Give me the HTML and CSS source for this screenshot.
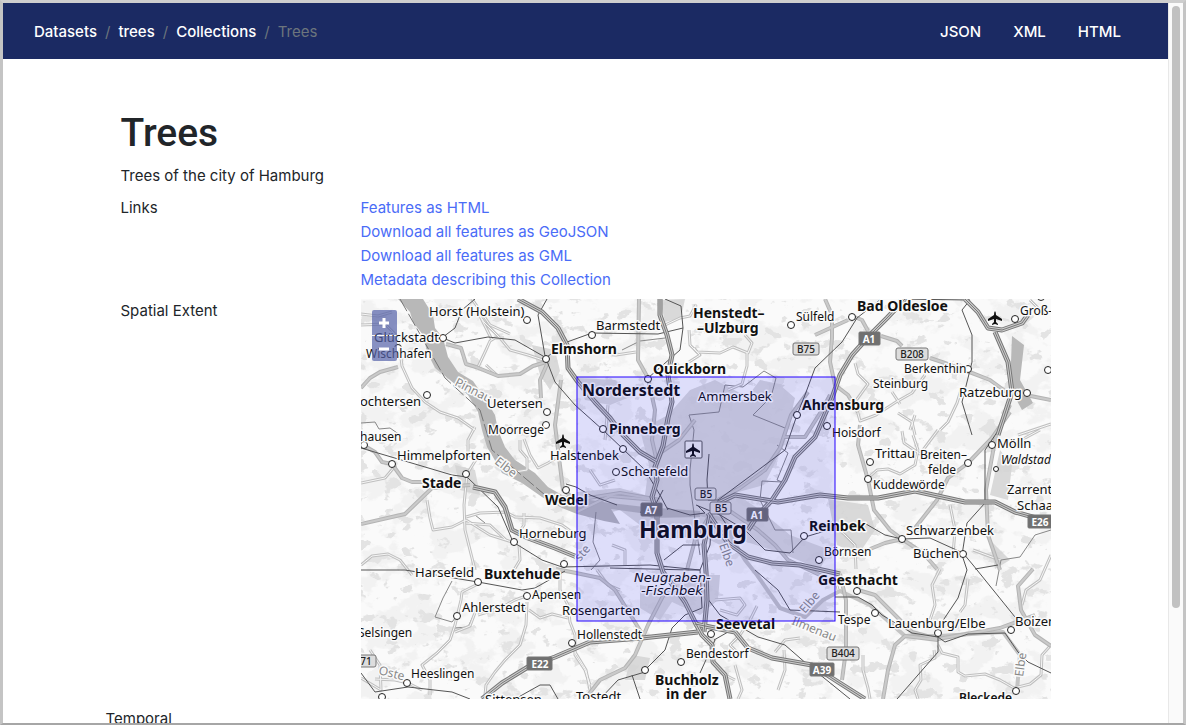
FILE: index.html
```html
<!DOCTYPE html>
<html lang="en">
<head>
<meta charset="utf-8">
<title>Trees</title>
<link rel="stylesheet" href="styles.css">
</head>
<body>
<div class="window">
  <div class="page">
    <header class="navbar">
      <nav aria-label="Breadcrumb">
        <ol class="breadcrumb">
          <li><a href="#">Datasets</a></li>
          <li><a href="#">trees</a></li>
          <li><a href="#">Collections</a></li>
          <li class="active">Trees</li>
        </ol>
      </nav>
      <nav class="formats" aria-label="Formats">
        <a href="#">JSON</a><a href="#">XML</a><a href="#">HTML</a>
      </nav>
    </header>
    <main class="container">
      <h1>Trees</h1>
      <p class="lead">Trees of the city of Hamburg</p>
      <section class="row tight">
        <div class="term">Links</div>
        <ul class="links">
          <li><a href="#">Features as HTML</a></li>
          <li><a href="#">Download all features as GeoJSON</a></li>
          <li><a href="#">Download all features as GML</a></li>
          <li><a href="#">Metadata describing this Collection</a></li>
        </ul>
      </section>
      <section class="row">
        <div class="term">Spatial Extent</div>
        <div class="map">
          <svg class="tiles" viewBox="361 299 690 400" role="img" aria-label="Map of Hamburg">
            <defs>
              <filter id="fields" x="0" y="0" width="100%" height="100%" color-interpolation-filters="sRGB">
                <feTurbulence type="fractalNoise" baseFrequency="0.06 0.08" numOctaves="4" seed="8"/>
                <feColorMatrix values="0 0 0 0 .89  0 0 0 0 .89  0 0 0 0 .89  16 0 0 0 -9.8"/>
              </filter>
              <filter id="meadows" x="0" y="0" width="100%" height="100%" color-interpolation-filters="sRGB">
                <feTurbulence type="fractalNoise" baseFrequency="0.03 0.04" numOctaves="5" seed="21"/>
                <feColorMatrix values="0 0 0 0 .95  0 0 0 0 .95  0 0 0 0 .95  14 0 0 0 -7"/>
              </filter>
              <g id="motorways">
                <path d="M518 299L542 312L558 328L567 345L568 368L578 382L595 402L610 418L622 434L640 452L657 462"/>
                <path d="M660 299L660 315L667 335L672 355L668 375L672 402L668 418L663 446L655 467L657 480L652 497L657 513L657 553L663 572L675 588L685 602L695 622L702 635L712 645L713 662L725 675L730 699"/>
                <path d="M482 699L502 683L528 667L555 657L590 642L642 638L698 632"/>
                <path d="M695 624L735 632L748 648L772 658L812 665L835 680L865 699"/>
                <path d="M905 299L887 318L870 335L852 355L840 375L832 398L815 437L795 457L785 480L772 500L758 515L748 530"/>
                <path d="M718 503L735 495L778 502L820 495L848 498L878 498L915 491L965 502L995 502L1015 512L1051 522"/>
                <path d="M708 513L728 543L748 557L772 563L800 565L840 574"/>
                <path d="M473 487L495 492L505 507L512 530L528 538L555 548L577 557"/>
                <path d="M710 515L704 545L706 572L707 600L704 632"/>
                <path d="M965 299L978 312L988 328L1002 330L1022 323L1030 312"/>
                <path d="M995 332L1008 362L1012 392L998 435"/>
              </g>
              <g id="mainroads">
                <path d="M825 299L832 315L832 338L830 362L835 385L848 395L858 412"/>
                <path d="M639 299L638 360L648 378L655 410L652 440L657 462"/>
                <path d="M361 524L405 514L432 488L470 485"/>
                <path d="M363 445L375 452L382 462L392 464L402 478L412 482L432 482"/>
                <path d="M361 388L370 378L380 372L398 367"/>
                <path d="M446 344L461 348L466 364L476 367L498 376L520 374L533 366L546 362"/>
                <path d="M548 362L540 380L541 398M561 380L555 425L563 490L576 500L620 493L660 500"/>
                <path d="M718 500L740 488L765 470L780 448L791 415L808 392"/>
                <path d="M860 425L858 445L868 480L874 510L890 530L902 539L923 553L937 569"/>
                <path d="M915 528L937 500L948 478L968 463L992 438L1010 412"/>
                <path d="M870 549L885 543L902 539"/>
                <path d="M1000 570L988 535L986 490L996 435L1010 405"/>
                <path d="M881 336L897 341L902 346M930 358L942 362L972 373L990 380L1005 391L1051 400"/>
                <path d="M868 331L862 320L852 316M848 320L815 335"/>
                <path d="M858 590L875 595L890 610L912 632L938 639L1000 628L1035 615"/>
                <path d="M938 640L905 636L895 645L888 670L883 699"/>
                <path d="M664 594L648 625L635 655L625 668L600 680L585 699"/>
                <path d="M641 632L615 590L600 578L576 573L556 569"/>
                <path d="M784 437L805 437L822 410L830 395M656 500L610 496L577 512"/>
                <path d="M840 574L846 600L846 650L842 680"/>
                <path d="M1051 646L1035 635L1021 610L1018 586L1033 569"/>
                <path d="M718 503L758 530L775 545L788 560L822 576"/>
                <path d="M710 515L695 540L687 570M695 420L679 440L660 453"/>
              </g>
              <g id="lanes">
                <path d="M361 325L385 324L396 335L400 350L402 366L412 388L425 402L440 412L458 418L475 430M361 314L378 316L392 312"/>
                <path d="M478 367L486 350L490 341L495 338L504 338M492 340L480 316L484 322L500 338L510 350L528 355L543 360M472 299L490 325L510 334"/>
                <path d="M475 427L468 440L468 455L477 458L467 474L464 505L465 530L470 550L475 570M427 500L430 518L433 530L452 527L466 520L490 535L512 542M466 523L490 525L506 540"/>
                <path d="M466 517L480 513L506 512L515 517L540 518L562 525L576 535"/>
                <path d="M524 513L524 525L517 535M519 545L520 560L514 570"/>
                <path d="M560 569L560 590L568 605L570 622L575 635L575 655L585 670L590 685"/>
                <path d="M498 376L486 365M524 439L530 455L538 468L548 463L556 458M520 440L520 450L527 458L527 470L515 472"/>
                <path d="M606 352L616 355L636 352M694 348L697 352L720 353L733 347L748 353L752 343L745 335M747 353L747 366L742 384L728 390"/>
                <path d="M665 325L680 318L690 316L696 305M689 330L690 345L700 355L689 362"/>
                <path d="M855 363L858 374L868 384L855 402L860 421L876 415L896 402L912 393L925 375M892 392L900 404M898 413L912 422L915 435"/>
                <path d="M940 430L948 422L957 403L961 390M902 431L904 443L920 454L938 430M868 478L877 470L888 469L900 474L915 465L918 450L913 435"/>
                <path d="M940 569L932 585L935 605L930 620M968 579L965 605L960 612"/>
                <path d="M950 505L955 530L953 555M835 575L838 590M828 520L845 535L855 545L856 569"/>
                <path d="M1051 555L1040 580L1026 590L1022 605M938 645L942 653L958 657L958 672L965 676L985 674L1000 680L1014 688L1030 684L1041 675L1042 655L1051 645"/>
                <path d="M934 650L935 658L920 665L921 680L915 690L918 699M863 655L863 670L868 688L870 699"/>
                <path d="M715 600L740 598L745 605L737 615L720 610M757 606L750 620L740 635L730 645L740 655"/>
                <path d="M784 650L785 670L778 690M775 652L785 640L800 638M735 680L725 675M735 665L742 690L738 699"/>
                <path d="M527 602L526 625L520 645L505 660L495 672L486 685L485 695M526 596L515 600L500 608L478 615M476 585L462 592L461 600L455 625L450 640L437 653L422 665L430 680L430 695M455 632L470 626L476 610"/>
                <path d="M529 610L540 618L552 614L568 618M575 652L586 670L590 690"/>
                <path d="M361 565L372 556L388 554L400 560L412 575M361 483L385 478L396 465M370 650L380 665L381 690L361 678M422 690L408 683L395 680L375 679"/>
                <path d="M612 545L625 550L625 565M620 590L608 585L597 570M590 470L600 485L615 480M605 440L608 405"/>
                <path d="M1012 445L1040 430M910 430L915 415M1018 435L1051 424M973 550L1000 560M1030 300L1045 315"/>
              </g>
            </defs>
            <rect class="land" x="361" y="299" width="690" height="400"/>
            <rect x="361" y="299" width="690" height="400" filter="url(#meadows)"/>
            <rect x="361" y="299" width="690" height="400" filter="url(#fields)"/>
            <g class="urban">
              <path d="M640 430L668 415L690 390L715 380L740 393L718 410L735 425L780 385L795 398L784 445L764 485L735 493L760 510L790 535L830 550L820 569L778 552L740 540L720 545L700 535L665 540L640 525L620 510L600 515L577 505L577 492L620 488L645 495L649 465Z"/>
              <path d="M686 575L720 575L718 600L700 615L672 602L660 620L640 608L640 585L665 590ZM785 385L760 380L745 400L700 395L690 435L740 430Z"/>
              <path d="M828 499L868 505L875 530L858 555L837 545ZM577 378L615 380L630 397L610 405L585 400ZM532 345L555 350L560 371L550 390L540 375ZM660 300L685 299L681 318L665 322Z"/>
              <path d="M455 465L475 470L480 495L460 490ZM632 655L650 658L645 680L625 680ZM1000 450L1012 465L1008 500L990 495ZM990 540L1010 560L995 569Z"/>
            </g>
            <g class="water">
              <path d="M398 299L410 312L413 322L423 335L427 352L435 368L450 380L468 395L478 412L482 430L487 447L493 457L502 473L522 483L542 497L562 508L577 514L604 521L620 524L611 509L640 513L652 518L700 517L700 511L645 507L610 503L577 498L562 495L548 487L535 473L515 460L505 447L498 430L495 415L486 400L473 381L458 372L448 357L443 338L435 328L433 315L423 299Z"/>
              <path d="M1012 336L1024 345L1020 380L1033 403L1022 410L1010 388Z"/>
            </g>
            <path class="river" d="M700 514L725 520L733 540L745 560L757 575L780 608L805 617L823 600L840 591L870 605L905 636L940 636L1003 632L1020 655L1017 690"/>
            <path class="boundary" d="M700 555L690 485L690 470L694 430L689 415L719 412L725 385L743 387L764 371L776 378L771 397L753 415L785 428M777 445L788 453L777 480L782 482L762 481L760 500L775 530L791 530L793 553M596 512L593 542L600 560L591 570M361 423L375 422L379 429L390 428L400 435M475 515L485 523M996 586L1001 560L1020 557L1035 535L1051 530M452 581L443 598L435 617L452 622L460 612M455 628L468 627L476 610M622 350L640 341L665 338"/>
            <use href="#lanes" class="lane-edge"/><use href="#lanes" class="lane-fill"/>
            <use href="#mainroads" class="main-edge"/><use href="#mainroads" class="main-fill"/>
            <g class="rail">
              <path d="M443 338L455 343L488 337L515 340L543 356M443 337L455 328L462 310L475 299"/>
              <path d="M547 299L538 315L545 356L555 382L575 405L603 430L623 449L645 470L660 495L668 510M547 357L567 342L592 333"/>
              <path d="M592 333L658 334L683 328L680 350L648 378M683 328L681 306L665 299"/>
              <path d="M361 448L452 475L467 477L498 507L508 530L513 542L542 560L562 567L650 565L700 570L710 545L712 510"/>
              <path d="M361 570L405 570L478 582L522 590L535 588L565 571"/>
              <path d="M881 299L857 318L842 342L815 368L805 395L797 415L785 450L745 480L718 500L708 500L707 480L709 454"/>
              <path d="M712 510L745 530L765 550L790 553L805 537L835 528L866 524L885 535L902 539L930 538L963 553L973 565L1015 617"/>
              <path d="M1002 425L985 450L985 503L967 523L962 555L967 570L958 598L938 628L938 652L897 699"/>
              <path d="M898 299L970 300L962 310L972 335L972 362L962 402L972 435"/>
              <path d="M645 670L665 650L672 628L685 615L702 608L700 570L690 570L610 568M645 672L618 680L600 699M632 675L640 699"/>
              <path d="M707 598L720 615L758 637L785 645L808 665L850 699M714 640L735 628M700 673L715 640"/>
              <path d="M361 673L375 692L408 687L452 692L470 699M515 699L540 685L550 685L558 699"/>
              <path d="M835 597L858 597L872 605L882 615L912 633L938 637L945 642L968 634L1005 633L1018 652L1028 662L1051 673"/>
              <path d="M663 490L650 515L640 512M617 505L590 495L576 487L566 484M755 570L778 590L790 610L840 612M998 565L975 569"/>
              <path d="M696 505L720 515L728 527M697 505L705 513L690 515L667 508M664 560L683 545L700 545"/>
            </g>
            <path class="ferry" d="M400 299L425 343L445 378L480 410L492 450L545 495"/>
            <use href="#motorways" class="way-edge"/><use href="#motorways" class="way-fill"/><use href="#motorways" class="way-line"/>
            <g class="shields">
              <rect x="793" y="343" width="26" height="12" rx="2"/><rect x="896" y="348" width="32" height="12" rx="2"/>
              <rect x="695" y="488" width="21" height="12" rx="2"/><rect x="710" y="502" width="21" height="12" rx="2"/>
              <rect x="827" y="647" width="32" height="13" rx="2"/><rect x="350" y="655" width="26" height="12" rx="2"/>
            </g>
            <g class="shields dark">
              <rect x="859" y="332" width="21" height="13" rx="1"/><rect x="641" y="503" width="21" height="13" rx="1"/>
              <rect x="747" y="508" width="21" height="13" rx="1"/><rect x="527" y="657" width="25" height="13" rx="1"/>
              <rect x="810" y="663" width="24" height="13" rx="1"/><rect x="1028" y="515" width="25" height="13" rx="1"/>
            </g>
            <g class="ref">
              <text x="806" y="353">B75</text><text x="912" y="358">B208</text><text x="706" y="498">B5</text><text x="721" y="512">B5</text><text x="843" y="657">B404</text><text x="366" y="665">71</text>
            </g>
            <g class="ref light">
              <text x="869" y="343">A1</text><text x="651" y="514">A7</text><text x="757" y="519">A1</text><text x="540" y="668">E22</text><text x="822" y="674">A39</text><text x="1040" y="526">E26</text>
            </g>
            <g class="stations">
              <circle cx="443" cy="338" r="3.5"/><circle cx="527" cy="320" r="3.5"/><circle cx="398" cy="348" r="3.5"/><circle cx="546" cy="359" r="3.5"/><circle cx="592" cy="335" r="3.5"/><circle cx="427" cy="395" r="3.5"/><circle cx="547" cy="412" r="3.5"/><circle cx="546" cy="425" r="3.5"/><circle cx="648" cy="379" r="3.5"/><circle cx="791" cy="325" r="3.5"/><circle cx="852" cy="317" r="3.5"/><circle cx="1015" cy="319" r="3.5"/><circle cx="968" cy="369" r="3.5"/><circle cx="1027" cy="393" r="3.5"/><circle cx="1048" cy="370" r="3.5"/><circle cx="797" cy="415" r="3.5"/><circle cx="827" cy="426" r="3.5"/><circle cx="603" cy="429" r="3.5"/><circle cx="623" cy="449" r="3.5"/><circle cx="616" cy="472" r="3.5"/><circle cx="364" cy="445" r="3.5"/><circle cx="392" cy="464" r="3.5"/><circle cx="466" cy="474" r="3.5"/><circle cx="566" cy="490" r="3.5"/><circle cx="514" cy="542" r="3.5"/><circle cx="564" cy="564" r="3.5"/><circle cx="870" cy="462" r="3.5"/><circle cx="868" cy="479" r="3.5"/><circle cx="968" cy="463" r="3.5"/><circle cx="992" cy="445" r="3.5"/><circle cx="996" cy="469" r="2.5"/><circle cx="902" cy="539" r="3.5"/><circle cx="963" cy="554" r="3.5"/><circle cx="804" cy="536" r="3.5"/><circle cx="819" cy="560" r="3.5"/><circle cx="478" cy="582" r="3.5"/><circle cx="527" cy="596" r="3.5"/><circle cx="457" cy="616" r="3.5"/><circle cx="572" cy="643" r="3.5"/><circle cx="407" cy="683" r="3.5"/><circle cx="382" cy="697" r="3.5"/><circle cx="711" cy="634" r="3.5"/><circle cx="681" cy="662" r="3.5"/><circle cx="645" cy="670" r="3.5"/><circle cx="857" cy="591" r="3.5"/><circle cx="875" cy="613" r="3.5"/><circle cx="938" cy="633" r="3.5"/><circle cx="1011" cy="630" r="3.5"/><circle cx="1016" cy="691" r="3.5"/><circle cx="1041" cy="297" r="3.5"/>
            </g>
            <rect class="airport" x="685" y="441" width="17" height="17" rx="1"/>
            <g class="plane">
              <path d="M0 -7Q1 -6 1 -3L7 1V3L1 1V4L3 6V7L0 6L-3 7V6L-1 4V1L-7 3V1L-1 -3Q-1 -6 0 -7Z" transform="translate(563 441)"/>
              <path d="M0 -7Q1 -6 1 -3L7 1V3L1 1V4L3 6V7L0 6L-3 7V6L-1 4V1L-7 3V1L-1 -3Q-1 -6 0 -7Z" transform="translate(693 450)"/>
              <path d="M0 -7Q1 -6 1 -3L7 1V3L1 1V4L3 6V7L0 6L-3 7V6L-1 4V1L-7 3V1L-1 -3Q-1 -6 0 -7Z" transform="translate(995 318)"/>
            </g>
            <g class="water-name">
              <text transform="translate(454 385) rotate(27)">Pinnau</text><text transform="translate(494 463) rotate(38)">Elbe</text><text transform="translate(719 545) rotate(70)">Elbe</text><text transform="translate(805 614) rotate(-50)">Elbe</text><text transform="translate(791 624) rotate(22)">Ilmenau</text><text transform="translate(378 674) rotate(14)">Oste</text><text transform="translate(1023 677) rotate(-82)">Elbe</text><text transform="translate(580 562) rotate(-50)">ste</text>
            </g>
            <g class="town">
              <text x="366" y="358">Wischhafen</text><text x="360" y="441">hausen</text><text x="488" y="434">Moorrege</text><text x="796" y="321">Sülfeld</text><text x="1020" y="315">Groß-G</text><text x="904" y="373">Berkenthin</text><text x="873" y="388">Steinburg</text><text x="832" y="437">Hoisdorf</text><text x="920" y="459">Breiten–</text><text x="928" y="474">felde</text><text x="873" y="489">Kuddewörde</text><text class="italic" x="1001" y="464">Waldstadt</text><text x="824" y="556">Börnsen</text><text x="532" y="599">Apensen</text><text x="358" y="637">Selsingen</text><text x="577" y="639">Hollenstedt</text><text x="411" y="678">Heeslingen</text><text x="686" y="658">Bendestorf</text><text x="838" y="624">Tespe</text>
            </g>
            <g class="town large">
              <text x="429" y="316">Horst (Holstein)</text><text x="374" y="342">Glückstadt</text><text x="596" y="330">Barmstedt</text><text x="360" y="406">ochtersen</text><text x="487" y="408">Uetersen</text><text x="397" y="460">Himmelpforten</text><text x="550" y="460">Halstenbek</text><text x="698" y="401">Ammersbek</text><text x="621" y="476">Schenefeld</text><text x="959" y="397">Ratzeburg</text><text x="875" y="458">Trittau</text><text x="997" y="448">Mölln</text><text x="1007" y="494">Zarrentin</text><text x="1017" y="510">Schaalsee</text><text x="906" y="535">Schwarzenbek</text><text x="913" y="558">Büchen</text><text x="519" y="538">Horneburg</text><text x="415" y="577">Harsefeld</text><text x="462" y="612">Ahlerstedt</text><text x="562" y="615">Rosengarten</text><text x="485" y="704">Sittensen</text><text x="576" y="701">Tostedt</text><text x="888" y="628">Lauenburg/Elbe</text><text x="1015" y="626">Boizenburg</text>
            </g>
            <g class="city">
              <text x="551" y="354">Elmshorn</text><text x="693" y="318">Henstedt–</text><text x="697" y="333">–Ulzburg</text><text x="653" y="374">Quickborn</text><text x="857" y="311">Bad Oldesloe</text><text x="802" y="410">Ahrensburg</text><text x="609" y="434">Pinneberg</text><text x="422" y="488">Stade</text><text x="545" y="505">Wedel</text><text x="809" y="531">Reinbek</text><text x="818" y="585">Geesthacht</text><text x="484" y="579">Buxtehude</text><text x="716" y="629">Seevetal</text><text x="655" y="685">Buchholz</text><text x="666" y="699">in der</text><text class="medium" x="959" y="702">Bleckede</text>
            </g>
            <text class="label-norderstedt" x="582" y="396">Norderstedt</text>
            <text class="label-hamburg" x="639" y="538">Hamburg</text>
            <g class="district"><text x="634" y="582">Neugraben-</text><text x="641" y="595">-Fischbek</text></g>
            <rect class="extent" x="577" y="377" width="258" height="244"/>
          </svg>
          <div class="zoom">
            <button type="button" aria-label="Zoom in"><svg viewBox="0 0 10 10"><path d="M5 0V10M0 5H10"/></svg></button>
            <button type="button" aria-label="Zoom out"><svg viewBox="0 0 10 10"><path d="M0 5H10"/></svg></button>
          </div>
        </div>
      </section>
      <section class="row outer"><div class="term">Temporal</div></section>
    </main>
  </div>
  <div class="scrollbar" aria-hidden="true"><div class="thumb"></div></div>
</div>
</body>
</html>
```

FILE: styles.css
```css
* { box-sizing: border-box; }
body {
  margin: 0;
  background: #c4c4c4;
  color: #212529;
  font: 400 15px/24px Inter, "Liberation Sans", sans-serif;
}
a { text-decoration: none; }
ul, ol { margin: 0; padding: 0; list-style: none; }

.window {
  display: flex;
  height: 100vh;
  overflow: hidden;
  border: 3px solid #c4c4c4;
  border-top-color: #cecece;
  border-bottom: 2px solid #a6a6a6;
  background: #fff;
}
.page { flex: 1; min-width: 0; overflow: hidden; }
.scrollbar {
  width: 15px;
  padding: 3px 3px 0;
  border-left: 1px solid #e8e8e8;
  background: #fafafa;
}
.thumb { height: 84%; border-radius: 4px; background: #c1c1c1; }

.navbar {
  display: flex;
  align-items: center;
  justify-content: space-between;
  height: 56px;
  padding: 2px 31px 0;
  background: #1b2a63;
}
.navbar a { color: #fff; font-weight: 500; }
.breadcrumb { display: flex; }
.breadcrumb li + li::before { content: "/"; padding: 0 8px; color: #6c757d; }
.breadcrumb .active { color: #6c757d; }
.formats { display: flex; }
.formats a { padding: 8px 16px; }

.container { max-width: 960px; margin: 0 auto; padding: 50px 15px 0; }
h1 { margin: 0 0 7px; font: 500 39px/48px Roboto, Inter, sans-serif; }
.lead { margin: 0 0 8px; }
.row { display: grid; grid-template-columns: 240px 1fr; margin-bottom: 8px; }
.row.tight { margin-bottom: 7px; }
.outer { margin-left: -15px; }
.links a { color: #4a6cf7; }

.map { position: relative; }
.tiles { display: block; width: 100%; height: auto; }
.zoom { position: absolute; top: 11px; left: 11px; display: grid; gap: 1px; }
.zoom button {
  display: grid;
  place-items: center;
  width: 25px;
  height: 25px;
  padding: 0;
  border: 0;
  border-radius: 2px 2px 0 0;
  background: rgba(85, 98, 170, .7);
}
.zoom button:last-child { border-radius: 0 0 2px 2px; }
.zoom svg { width: 10px; height: 10px; fill: none; stroke: #fff; stroke-width: 3; }

.land { fill: #fafafa; }
.urban { fill: #d4d4d4; opacity: .85; }
.water { fill: #b8b8b8; }
.river, .boundary, .rail, .ferry, .way-edge, .way-fill, .way-line,
.main-edge, .main-fill, .lane-edge, .lane-fill { fill: none; stroke-linejoin: round; }
.river { stroke: #c4c4c4; stroke-width: 4; }
.boundary { stroke: #888; stroke-width: 1; }
.ferry { stroke: #777; stroke-dasharray: 14 3; }
.rail { stroke: #555; stroke-width: 1; }
.lane-edge { stroke: #c0c0c0; stroke-width: 3; }
.lane-fill { stroke: #f6f6f6; stroke-width: 1; }
.main-edge { stroke: #b4b4b4; stroke-width: 4; }
.main-fill { stroke: #cacaca; stroke-width: 2; }
.way-edge { stroke: #777; stroke-width: 5; }
.way-fill { stroke: #ccc; stroke-width: 3; }
.way-line { stroke: #777; stroke-width: 1; }
.shields { fill: #ddd; stroke: #777; }
.shields.dark { fill: #707070; stroke: #777; }
.ref { font: 500 10px "Noto Sans", sans-serif; fill: #222; text-anchor: middle; }
.ref.light { font-weight: 700; fill: #fff; }
.stations { fill: #fff; stroke: #222; }
.airport { fill: #eee; stroke: #555; }
.plane { fill: #111; }
.town, .city, .district, .label-norderstedt, .label-hamburg, .water-name {
  font-family: "Noto Sans", sans-serif;
  fill: #111;
  stroke: #fafafa;
  stroke-width: 3px;
  stroke-linejoin: round;
  paint-order: stroke;
}
.town { font-size: 12px; }
.town.large { font-size: 13px; }
.town .italic { font-style: italic; }
.city { font-size: 14px; font-weight: 700; }
.city .medium { font-size: 12px; font-weight: 600; }
.label-norderstedt { font-size: 16px; font-weight: 700; }
.label-hamburg { font-size: 23px; font-weight: 700; }
.district { font-family: "DejaVu Sans", sans-serif; font-size: 13px; font-style: italic; }
.water-name { font-size: 12px; fill: #888; }
.extent { fill: rgba(0, 0, 255, .11); stroke: #20f; stroke-width: 1; shape-rendering: geometricPrecision; }
```
